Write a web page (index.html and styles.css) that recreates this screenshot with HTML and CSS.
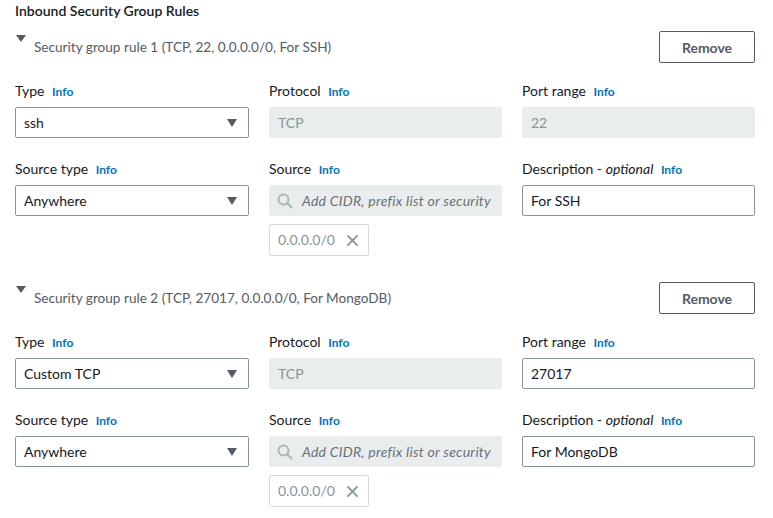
FILE: index.html
```html
<!DOCTYPE html>
<html>
<head>
<meta charset="utf-8">
<link rel="stylesheet" href="styles.css">
</head>
<body>
<div class="page">
  <div class="heading">Inbound Security Group Rules</div>

  <section class="rule">
    <div class="rule-head">
      <div class="rule-title"><span class="tri"></span><span>Security group rule 1 (TCP, 22, 0.0.0.0/0, For SSH)</span></div>
      <button class="btn">Remove</button>
    </div>
    <div class="grid">
      <div class="field">
        <div class="label">Type <a class="info">Info</a></div>
        <div class="box select"><span>ssh</span><span class="caret"></span></div>
      </div>
      <div class="field">
        <div class="label">Protocol <a class="info">Info</a></div>
        <div class="box disabled">TCP</div>
      </div>
      <div class="field">
        <div class="label">Port range <a class="info">Info</a></div>
        <div class="box disabled">22</div>
      </div>
      <div class="field">
        <div class="label">Source type <a class="info">Info</a></div>
        <div class="box select"><span>Anywhere</span><span class="caret"></span></div>
      </div>
      <div class="field">
        <div class="label">Source <a class="info">Info</a></div>
        <div class="box search">
          <svg class="sicon" width="16" height="16" viewBox="0 0 16 16"><circle cx="6.5" cy="6.5" r="5" fill="none" stroke="#aab7b8" stroke-width="2"/><line x1="10.2" y1="10.2" x2="14.5" y2="14.5" stroke="#aab7b8" stroke-width="2" stroke-linecap="round"/></svg>
          <span class="ph">Add CIDR, prefix list or security</span>
        </div>
        <div class="token"><span>0.0.0.0/0</span><svg width="13" height="13" viewBox="0 0 14 14"><path d="M1.5 1.5 L12.5 12.5 M12.5 1.5 L1.5 12.5" stroke="#879596" stroke-width="2"/></svg></div>
      </div>
      <div class="field">
        <div class="label">Description - <i>optional</i> <a class="info">Info</a></div>
        <div class="box">For SSH</div>
      </div>
    </div>
  </section>

  <section class="rule">
    <div class="rule-head">
      <div class="rule-title"><span class="tri"></span><span>Security group rule 2 (TCP, 27017, 0.0.0.0/0, For MongoDB)</span></div>
      <button class="btn">Remove</button>
    </div>
    <div class="grid">
      <div class="field">
        <div class="label">Type <a class="info">Info</a></div>
        <div class="box select"><span>Custom TCP</span><span class="caret"></span></div>
      </div>
      <div class="field">
        <div class="label">Protocol <a class="info">Info</a></div>
        <div class="box disabled">TCP</div>
      </div>
      <div class="field">
        <div class="label">Port range <a class="info">Info</a></div>
        <div class="box">27017</div>
      </div>
      <div class="field">
        <div class="label">Source type <a class="info">Info</a></div>
        <div class="box select"><span>Anywhere</span><span class="caret"></span></div>
      </div>
      <div class="field">
        <div class="label">Source <a class="info">Info</a></div>
        <div class="box search">
          <svg class="sicon" width="16" height="16" viewBox="0 0 16 16"><circle cx="6.5" cy="6.5" r="5" fill="none" stroke="#aab7b8" stroke-width="2"/><line x1="10.2" y1="10.2" x2="14.5" y2="14.5" stroke="#aab7b8" stroke-width="2" stroke-linecap="round"/></svg>
          <span class="ph">Add CIDR, prefix list or security</span>
        </div>
        <div class="token"><span>0.0.0.0/0</span><svg width="13" height="13" viewBox="0 0 14 14"><path d="M1.5 1.5 L12.5 12.5 M12.5 1.5 L1.5 12.5" stroke="#879596" stroke-width="2"/></svg></div>
      </div>
      <div class="field">
        <div class="label">Description - <i>optional</i> <a class="info">Info</a></div>
        <div class="box">For MongoDB</div>
      </div>
    </div>
  </section>
</div>
</body>
</html>
```

FILE: styles.css
```css
* { box-sizing: border-box; }
html, body { margin: 0; padding: 0; background: #ffffff; }
body {
  font-family: Lato, "Liberation Sans", Arial, sans-serif;
  font-size: 14px;
  line-height: 20px;
  color: #16191f;
}
.page {
  width: 773px;
  padding: 1px 18px 0 15px;
}
.heading {
  height: 20px;
  line-height: 20px;
  font-weight: 600;
  color: #16191f;
}
.rule { margin-top: 10px; }
.rule + .rule { margin-top: 26px; }
.rule-head {
  display: flex;
  justify-content: space-between;
  align-items: center;
  height: 32px;
}
.rule-title {
  display: flex;
  align-items: center;
  color: #545b64;
  font-size: 13.6px;
  line-height: 20px;
}
.tri {
  width: 0; height: 0;
  border-left: 5px solid transparent;
  border-right: 5px solid transparent;
  border-top: 7px solid #545b64;
  margin: -18px 8px 0 1px;
}
.btn {
  width: 96px;
  height: 32px;
  border: 1px solid #545b64;
  border-radius: 2px;
  background: #fff;
  color: #545b64;
  font-family: inherit;
  font-size: 14px;
  font-weight: 700;
  padding: 0;
}
.grid {
  display: grid;
  grid-template-columns: 234px 233px 233px;
  column-gap: 20px;
  row-gap: 21px;
  margin-top: 18px;
}
.label {
  height: 20px;
  line-height: 20px;
  margin-bottom: 6px;
  white-space: nowrap;
}
.info {
  font-size: 12px;
  line-height: 1;
  font-weight: 700;
  color: #0073bb;
  margin-left: 4px;
}
.box {
  height: 31px;
  border: 1px solid #879596;
  border-radius: 2px;
  padding: 0 11px 0 8px;
  display: flex;
  align-items: center;
  background: #fff;
  color: #16191f;
  white-space: nowrap;
  overflow: hidden;
}
.select { justify-content: space-between; }
.caret {
  width: 0; height: 0;
  border-left: 5px solid transparent;
  border-right: 5px solid transparent;
  border-top: 8px solid #545b64;
}
.disabled {
  background: #eaeded;
  border-color: #eaeded;
  color: #879596;
}
.search {
  background: #eaeded;
  border-color: #eaeded;
  padding-left: 7px;
}
.sicon { flex: none; margin-right: 9px; }
.ph {
  font-style: italic;
  color: #687078;
  letter-spacing: 0.25px;
}
.token {
  margin-top: 8px;
  width: 100px;
  height: 32px;
  border: 1px solid #d5dbdb;
  border-radius: 2px;
  display: flex;
  align-items: center;
  padding: 0 8px 0 8px;
  color: #879596;
  gap: 11px;
}
```
